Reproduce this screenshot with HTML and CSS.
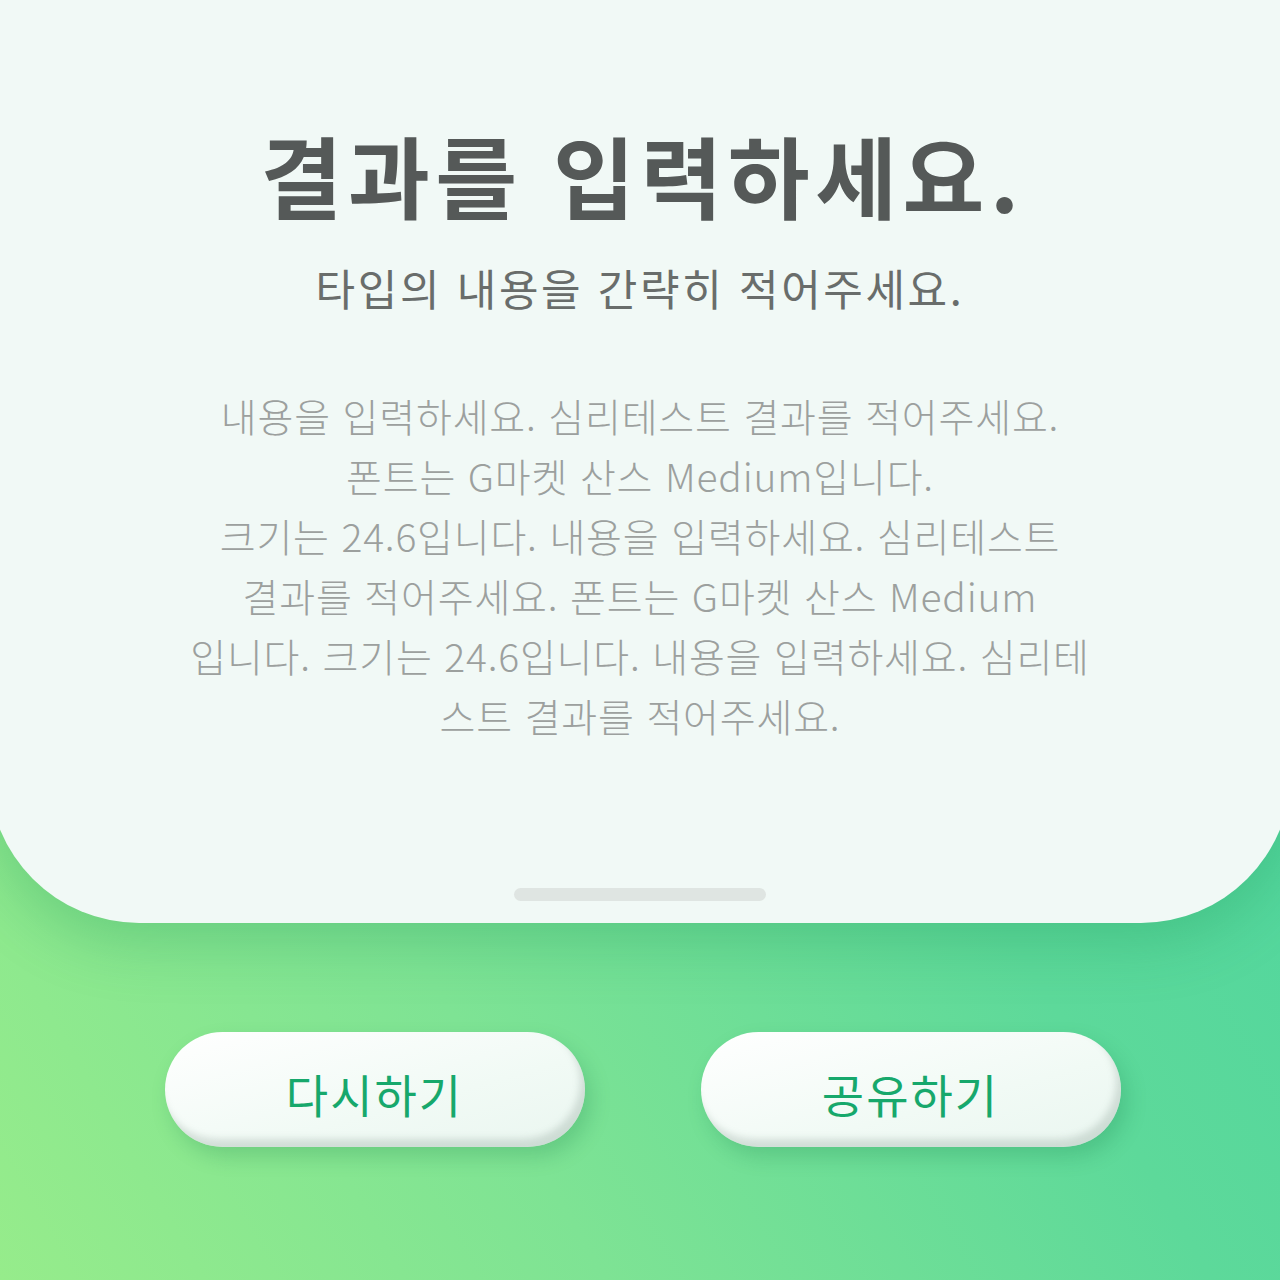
FILE: index.html
```html
<!DOCTYPE html>
<html lang="ko">
    <head>
        <meta charset="utf-8" />
        <title>결과</title>
        <link rel="stylesheet" href="styles.css">
    </head>
    <body>
        <div class="page">
            <div class="sheet">
                <h1 class="result-title">결과를 입력하세요.</h1>
                <h2 class="result-type">타입의 내용을 간략히 적어주세요.</h2>
                <p class="result-text">
                    내용을 입력하세요. 심리테스트 결과를 적어주세요.<br>
                    폰트는 G마켓 산스 Medium입니다.<br>
                    크기는 24.6입니다. 내용을 입력하세요. 심리테스트<br>
                    결과를 적어주세요. 폰트는 G마켓 산스 Medium<br>
                    입니다. 크기는 24.6입니다. 내용을 입력하세요. 심리테<br>
                    스트 결과를 적어주세요.
                </p>
                <span class="handle"></span>
            </div>

            <div class="actions">
                <button type="button" class="pill-button">다시하기</button>
                <button type="button" class="pill-button">공유하기</button>
            </div>
        </div>
    </body>
</html>
```

FILE: styles.css
```css
html, body {
    margin: 0;
    padding: 0;
}

body {
    width: 1280px;
    height: 1280px;
    overflow: hidden;
    font-family: "Noto Sans CJK KR", "Noto Sans", sans-serif;
    background: linear-gradient(60deg, #96ec8b 0%, #7ee394 30%, #5dd99a 60%, #44d3a2 100%);
}

.page {
    display: flex;
    flex-direction: column;
}

/* white sheet, a bit wider than the screen so the corners curve off-edge */
.sheet {
    margin: 0 -11px;
    min-height: 923px;
    box-sizing: border-box;
    padding-top: 114px;
    padding-bottom: 22px;
    background-color: #f1f9f6;
    border-radius: 0 0 150px 150px;
    box-shadow: 0 18px 60px rgba(20, 140, 80, 0.28);
    display: flex;
    flex-direction: column;
    align-items: center;
    text-align: center;
}

.result-title {
    margin: 0;
    font-size: 89px;
    line-height: 120px;
    font-weight: 700;
    color: #555958;
    letter-spacing: 5.5px;
    padding-left: 5px;
}

.result-type {
    margin: 23px 0 0 0;
    font-size: 43px;
    line-height: 60px;
    font-weight: 400;
    color: #696d6b;
    letter-spacing: 2.6px;
}

.result-text {
    margin: 68px 0 0 0;
    font-size: 39px;
    line-height: 60px;
    font-weight: 300;
    color: #9ca09e;
    white-space: nowrap;
    letter-spacing: 0.8px;
}

.handle {
    display: block;
    margin-top: auto;
    width: 252px;
    height: 13px;
    border-radius: 7px;
    background-color: #dfe5e2;
}

.actions {
    display: flex;
    justify-content: center;
    gap: 116px;
    margin-top: 109px;
    padding-left: 5px;
}

.pill-button {
    width: 420px;
    height: 115px;
    border: none;
    border-radius: 58px;
    background: linear-gradient(165deg, #ffffff 0%, #f1faf5 60%, #eaf6f0 100%);
    box-shadow: inset -5px -8px 7px rgba(130, 150, 140, 0.28),
                6px 10px 20px rgba(20, 120, 70, 0.22);
    font-family: "Noto Sans CJK KR", "Noto Sans", sans-serif;
    font-size: 46px;
    font-weight: 400;
    letter-spacing: 2px;
    color: #17a86c;
    padding: 6px 0 0 0;
    cursor: pointer;
}
```
